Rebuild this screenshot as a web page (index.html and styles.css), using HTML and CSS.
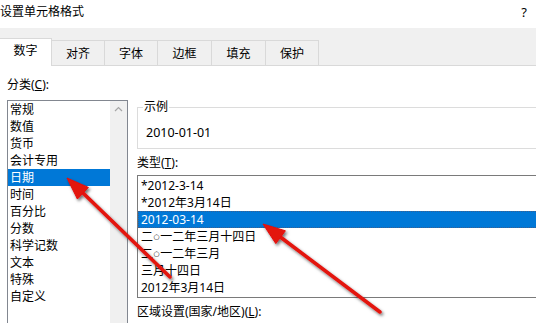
FILE: index.html
```html
<!DOCTYPE html>
<html lang="zh-CN">
<head>
<meta charset="utf-8">
<title>设置单元格格式</title>
<link rel="stylesheet" href="styles.css">
</head>
<body>
<div class="dialog">
  <div class="titlebar">
    <span class="title">设置单元格格式</span>
    <span class="help">?</span>
  </div>
  <div class="tabstrip">
    <div class="tab active">数字</div>
    <div class="tab">对齐</div>
    <div class="tab">字体</div>
    <div class="tab">边框</div>
    <div class="tab">填充</div>
    <div class="tab">保护</div>
  </div>
  <div class="page">
    <div class="left">
      <div class="label first">分类(<u>C</u>):</div>
      <div class="catlist">
        <div class="items">
          <div class="item">常规</div>
          <div class="item">数值</div>
          <div class="item">货币</div>
          <div class="item">会计专用</div>
          <div class="item selected">日期</div>
          <div class="item">时间</div>
          <div class="item">百分比</div>
          <div class="item">分数</div>
          <div class="item">科学记数</div>
          <div class="item">文本</div>
          <div class="item">特殊</div>
          <div class="item">自定义</div>
        </div>
        <div class="scrollbar">
          <svg class="uparrow" width="9" height="6" viewBox="0 0 9 6"><path d="M1 5 L4.5 1.5 L8 5" fill="none" stroke="#a6a6a6" stroke-width="1.2"/></svg>
        </div>
      </div>
    </div>
    <div class="right">
      <fieldset class="sample">
        <legend>示例</legend>
        <div class="sample-value">2010-01-01</div>
      </fieldset>
      <div class="label type-label">类型(<u>T</u>):</div>
      <div class="typelist">
        <div class="titem">*2012-3-14</div>
        <div class="titem">*2012年3月14日</div>
        <div class="titem selected focus">2012-03-14</div>
        <div class="titem">二<span class="zero">○</span>一二年三月十四日</div>
        <div class="titem">二<span class="zero">○</span>一二年三月</div>
        <div class="titem">三月十四日</div>
        <div class="titem">2012年3月14日</div>
      </div>
      <div class="label locale-label">区域设置(国家/地区)(<u>L</u>):</div>
    </div>
  </div>
  <svg class="arrows" width="536" height="323" viewBox="0 0 536 323">
    <defs>
      <filter id="sh" x="-20%" y="-20%" width="140%" height="140%">
        <feDropShadow dx="1.5" dy="2" stdDeviation="1.6" flood-color="#000" flood-opacity="0.55"/>
      </filter>
    </defs>
    <g filter="url(#sh)" fill="#e3120e" stroke="#e3120e">
      <line x1="170" y1="277" x2="82" y2="192" stroke-width="3.5" stroke-linecap="round"/>
      <polygon points="67,178 88.4,187.4 77.4,199" stroke-width="1"/>
      <line x1="380" y1="312" x2="279" y2="236" stroke-width="3.5" stroke-linecap="round"/>
      <polygon points="263,224 285.4,230.8 275.8,243.6" stroke-width="1"/>
    </g>
  </svg>
</div>
</body>
</html>
```

FILE: styles.css
```css
* { box-sizing: border-box; }
html, body {
  margin: 0;
  padding: 0;
  background: #ffffff;
}
body {
  width: 536px;
  height: 323px;
  overflow: hidden;
  font-family: "Noto Sans", "Noto Sans CJK SC", sans-serif;
  font-size: 12px;
  color: #000;
}
.dialog {
  position: relative;
  width: 536px;
  height: 323px;
  overflow: hidden;
}
.titlebar {
  height: 28px;
  display: flex;
  align-items: center;
  justify-content: space-between;
  padding: 0 9px 0 0;
  margin-top: -2px;
  line-height: 16px;
}
.help {
  font-size: 13px;
}
.tabstrip {
  height: 38px;
  margin-top: 2px;
  background: #f0f0f0;
  display: flex;
  align-items: flex-end;
  border-bottom: 1px solid #d9d9d9;
}
.tab {
  width: 54px;
  height: 25px;
  margin-left: -1px;
  border: 1px solid #d9d9d9;
  border-bottom: none;
  background: #f0f0f0;
  display: flex;
  align-items: center;
  justify-content: center;
  line-height: 16px;
  padding-top: 1px;
}
.tab.active {
  width: 53px;
  margin-left: -1px;
  height: 28px;
  margin-bottom: -1px;
  background: #ffffff;
  position: relative;
  z-index: 1;
  padding-top: 0;
  padding-bottom: 3px;
}
.tab:nth-child(4), .tab:nth-child(5) { width: 55px; }
.page {
  display: flex;
  padding-left: 7px;
}
.left {
  width: 121px;
  flex: none;
}
.label {
  line-height: 16px;
  white-space: nowrap;
}
.label u {
  text-decoration: underline;
  text-underline-offset: 1px;
}
.label.first {
  height: 34px;
  padding-top: 11px;
}
.catlist {
  height: 240px;
  border: 1px solid #828790;
  display: flex;
}
.items {
  flex: 1;
}
.item {
  height: 17px;
  line-height: 17px;
  padding-left: 2px;
  white-space: nowrap;
}
.item.selected {
  background: #0078d7;
  color: #fff;
}
.scrollbar {
  width: 17px;
  flex: none;
  background: #f0f0f0;
  display: flex;
  justify-content: center;
  padding-top: 5px;
}
.uparrow { display: block; }
.right {
  margin-left: 9px;
  width: 420px;
  flex: none;
}
.sample {
  margin: 33px 0 0 0;
  padding: 0 0 7px 5px;
  border: 1px solid #dcdcdc;
  min-width: 0;
}
.sample legend {
  padding: 0 1px;
  line-height: 16px;
}
.sample-value {
  margin-top: 10px;
  padding-left: 3px;
  line-height: 16px;
  font-size: 12.5px;
}
.type-label {
  margin-top: 6px;
}
.typelist {
  margin-top: 4px;
  height: 123px;
  border: 1px solid #7a7a7a;
  padding-top: 1px;
}
.titem {
  height: 17px;
  line-height: 17px;
  padding-left: 3px;
  white-space: nowrap;
}
.zero {
  font-family: "DejaVu Sans", sans-serif;
  font-size: 7px;
  vertical-align: 2px;
  padding: 0 0.5px;
}
.titem.selected {
  background: #0078d7;
  color: #fff;
}
.titem.focus {
  outline: 1px dotted #3b5f8f;
  outline-offset: -1px;
}
.locale-label {
  margin-top: 6px;
}
.arrows {
  position: absolute;
  left: 0;
  top: 0;
  pointer-events: none;
}
```
